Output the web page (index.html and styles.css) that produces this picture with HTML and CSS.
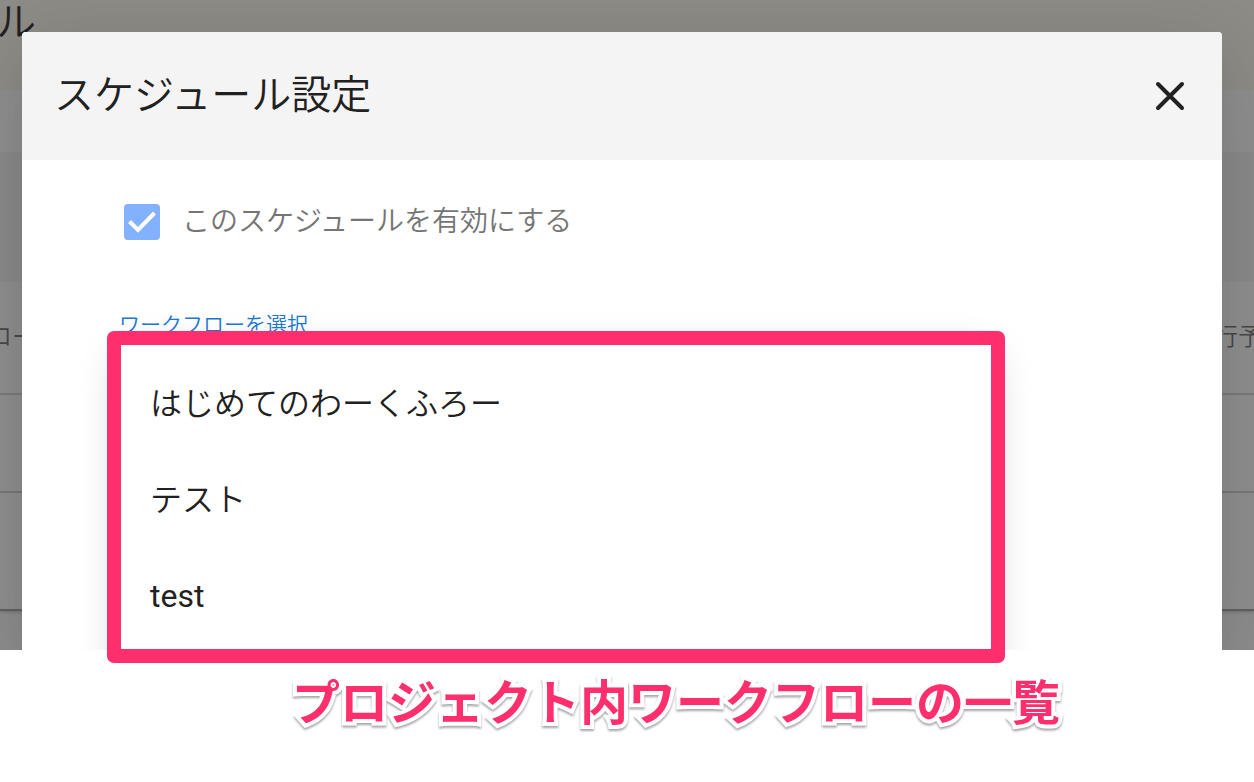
FILE: index.html
```
<!DOCTYPE html>
<html lang="ja">
<head>
  <meta charset="UTF-8" />
  <meta name="viewport" content="width=device-width, initial-scale=1.0" />
  <title>スケジュール設定</title>
  <link rel="stylesheet" href="styles.css">
</head>
<body>
<main class="figure">
  <div class="screen">

    <!-- dimmed page behind the dialog -->
    <div class="page">
      <div class="page-header">ル</div>
      <div class="page-toolbar"></div>
      <div class="page-band"></div>
      <div class="page-row page-columns"><span>ロー</span><span>行予</span></div>
      <div class="page-row"></div>
      <div class="page-row page-row-last"></div>
      <div class="page-footer"></div>
    </div>

    <section class="dialog" role="dialog" aria-labelledby="dialogTitle">
      <header class="dialog-header">
        <h1 id="dialogTitle">スケジュール設定</h1>
        <button class="close" type="button" aria-label="閉じる">
          <svg viewBox="0 0 32 32" width="32" height="32"><path d="M4 4 28 28M28 4 4 28" fill="none" stroke="currentColor" stroke-width="4" stroke-linecap="round"/></svg>
        </button>
      </header>
      <div class="dialog-body">
        <label class="check" for="enabled">
          <input id="enabled" type="checkbox" checked />
          <svg class="check-mark" viewBox="0 0 36 36" width="36" height="36"><path d="M5.5 17.5 14 26 30.5 9" fill="none" stroke="#fff" stroke-width="4"/></svg>
          <span>このスケジュールを有効にする</span>
        </label>
        <div class="field">
          <span class="field-label" id="workflowLabel">ワークフローを選択</span>
          <ul class="menu" role="listbox" aria-labelledby="workflowLabel">
            <li role="option">はじめてのわーくふろー</li>
            <li role="option">テスト</li>
            <li role="option" class="latin">test</li>
          </ul>
        </div>
      </div>
    </section>
  </div>
  <div class="highlight"></div>
</main>
<p class="caption">プロジェクト内ワークフローの一覧</p>
</body>
</html>
```

FILE: styles.css
```
*{box-sizing:border-box;}
body{margin:0;background:#fff;color:#212121;font-family:Roboto,"Noto Sans CJK JP",sans-serif;font-weight:350;overflow-x:hidden;}
.figure{position:relative;}
.screen{display:grid;overflow:hidden;}
.page,.dialog{grid-area:1/1;}

/* page */
.page{background:#8e8e8e;display:flex;flex-direction:column;}
.page-header{height:90px;background:#8e8d87;font-size:40px;line-height:46px;text-indent:-4px;}
.page-toolbar{height:62px;background:#909090;}
.page-band{height:130px;background:#8b8b8b;}
.page-row{height:98px;border-bottom:2px solid #7b7b7b;background:#909090;}
.page-columns{height:113px;display:flex;justify-content:space-between;font-size:24px;line-height:110px;color:#484848;margin:0 -8px 0 -12px;}
.page-row-last{position:relative;height:118px;border-bottom-color:#626262;box-shadow:0 1px 3px rgba(0,0,0,.2);}
.page-footer{height:39px;}

/* dialog */
.dialog{position:relative;margin:32px 32px 0 22px;background:#fff;border-radius:4px 4px 0 0;box-shadow:0 22px 30px -14px rgba(0,0,0,.1),0 18px 92px 16px rgba(0,0,0,.12);}
.dialog-header{display:flex;justify-content:space-between;align-items:center;height:128px;padding:0 36px 0 32px;background:#f4f4f4;border-radius:4px 4px 0 0;}
.dialog-header h1{margin:0;font-size:40px;font-weight:350;line-height:64px;}
.close{display:flex;padding:0;border:none;background:none;color:#212121;cursor:pointer;}
.dialog-body{padding:44px 231px 0 99px;}
.check{position:relative;display:flex;align-items:center;gap:22px;height:36px;padding-left:3px;font-size:28px;line-height:36px;color:#757575;}
.check input{appearance:none;width:36px;height:36px;margin:0;border-radius:4px;background:#82b1ff;}
.check-mark{position:absolute;left:3px;top:0;pointer-events:none;}
.field{margin-top:73px;}
.field-label{display:block;font-size:21px;line-height:24px;color:#1976d2;margin-left:-2px;}
/* the menu runs on past the lower edge of the screen */
.menu{margin:8px 0 -60px;padding:11px 0 65px;list-style:none;background:#fff;box-shadow:0 10px 40px rgba(0,0,0,.2);}
.menu li{height:96px;padding:0 29px;font-size:32px;line-height:96px;}
.menu .latin{font-weight:400;}

/* marker frame and its caption */
.highlight{position:absolute;top:331px;right:249px;bottom:-13px;left:107px;border:14px solid #ff2f6d;border-radius:7px;}
.caption{margin:16px 0 0;padding-left:98px;text-align:center;font-size:48px;font-weight:700;line-height:76px;color:#ff2f6d;-webkit-text-stroke:8px #fff;paint-order:stroke fill;filter:drop-shadow(0 2px 1px rgba(0,0,0,.35));}
```
